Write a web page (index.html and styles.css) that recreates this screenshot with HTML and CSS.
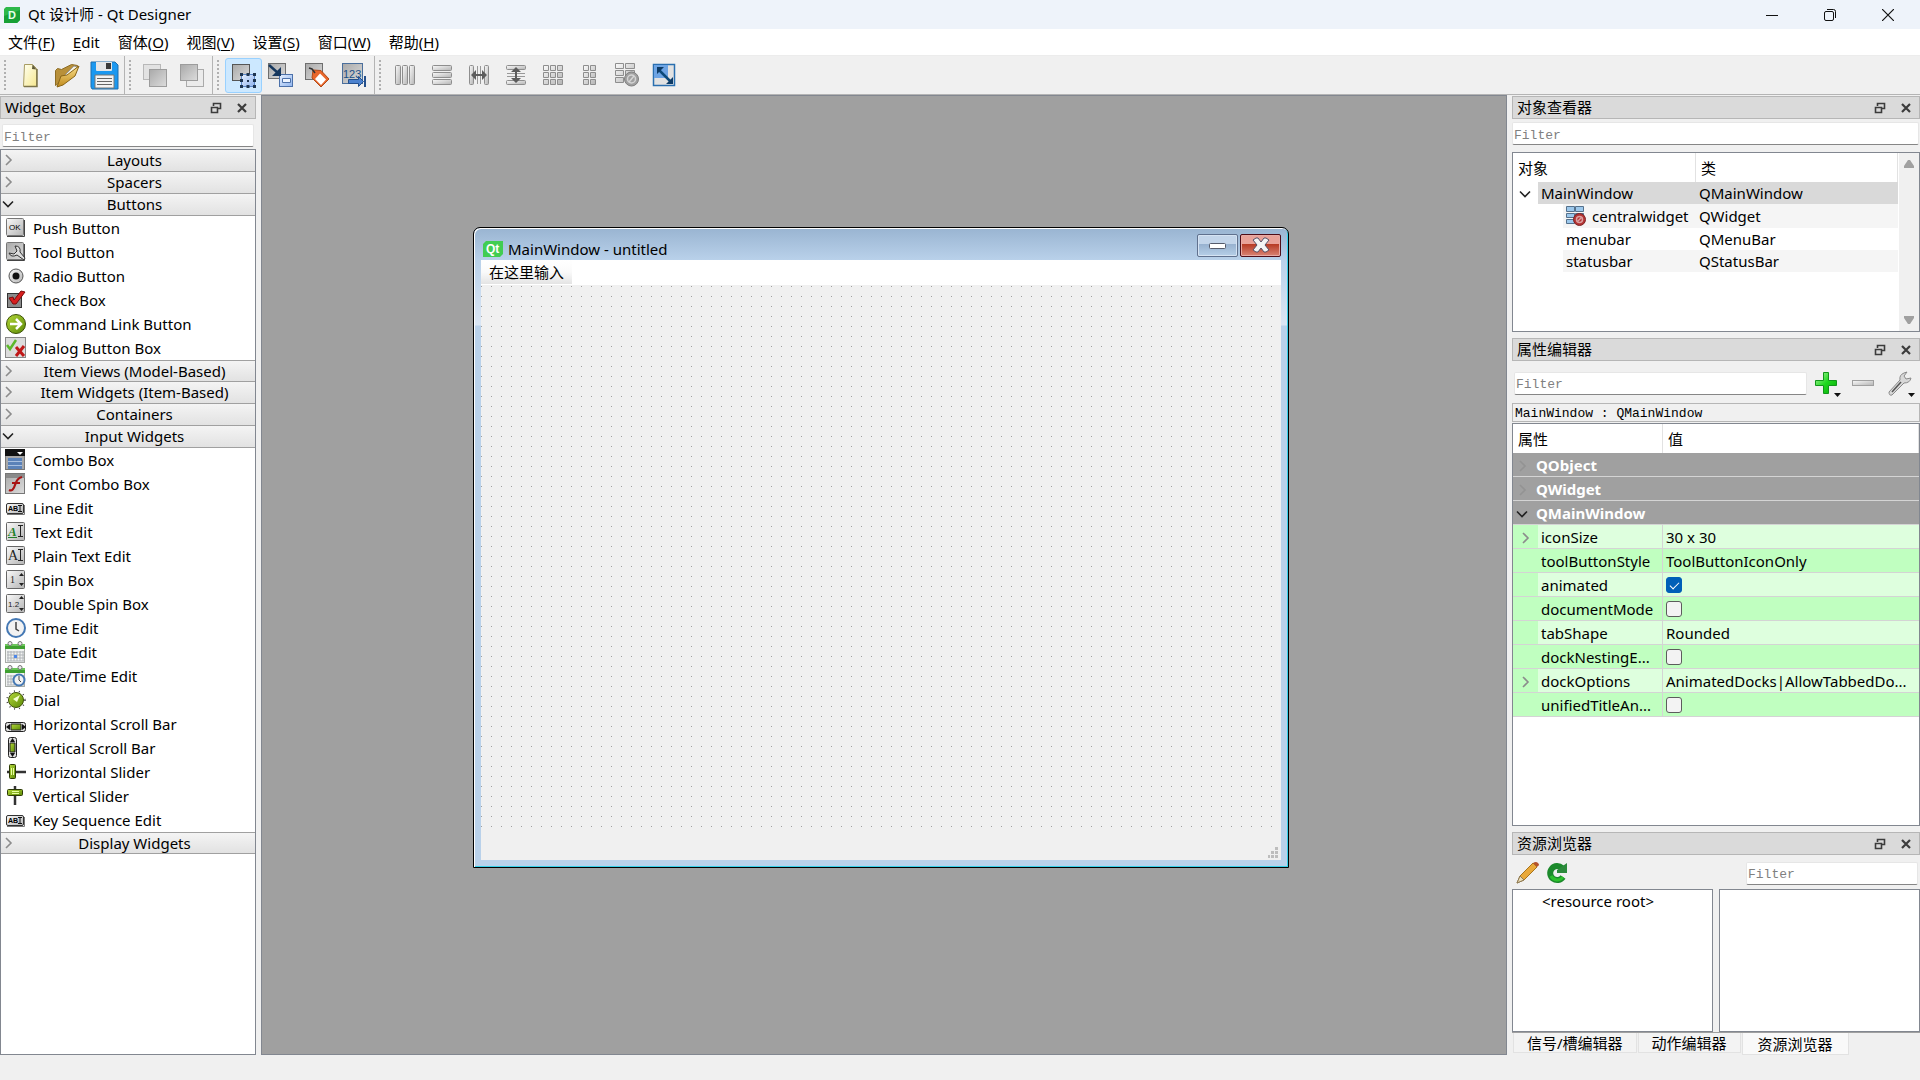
FILE: index.html
```html
<!DOCTYPE html>
<html lang="zh-CN">
<head>
    <meta charset="UTF-8">
    <meta name="viewport" content="width=device-width, initial-scale=1.0">
    <title>Qt 设计师 - Qt Designer</title>
    <link rel="stylesheet" href="styles.css">
</head>
<body>
    <!-- shared gradients and symbols -->
    <svg class="defs" width="0" height="0" aria-hidden="true">
        <defs>
            <linearGradient id="grey" x1="0" y1="0" x2="1" y2="1"><stop offset="0" stop-color="#fafafa"/><stop offset="1" stop-color="#b4b4b4"/></linearGradient>
            <linearGradient id="steel" x1="0" y1="0" x2="1" y2="1"><stop offset="0" stop-color="#a9a9a9"/><stop offset="1" stop-color="#dcdcdc"/></linearGradient>
            <linearGradient id="blue" x1="0" y1="0" x2="1" y2="1"><stop offset="0" stop-color="#e6f0ff"/><stop offset="1" stop-color="#8fb4ee"/></linearGradient>
            <linearGradient id="green" x1="0" y1="0" x2="1" y2="1"><stop offset="0" stop-color="#b4d83a"/><stop offset="1" stop-color="#5c8a06"/></linearGradient>
            <linearGradient id="gold" x1="0" y1="0" x2="0" y2="1"><stop offset="0" stop-color="#fbe08a"/><stop offset="1" stop-color="#c08a1c"/></linearGradient>
            <linearGradient id="page" x1="0" y1="0" x2="1" y2="1"><stop offset="0" stop-color="#fffff0"/><stop offset="1" stop-color="#f6e890"/></linearGradient>
            <linearGradient id="plus" x1="0" y1="0" x2="1" y2="1"><stop offset="0" stop-color="#b8f5a8"/><stop offset="0.5" stop-color="#1fd81f"/><stop offset="1" stop-color="#06a806"/></linearGradient>
        </defs>
        <symbol id="chev-right" viewBox="0 0 12 12"><path d="M4 1l5 5-5 5" fill="none" stroke="#8c8c8c" stroke-width="1.6"/></symbol>
        <symbol id="chev-down" viewBox="0 0 12 12"><path d="M1 3.500l5 5 5-5" fill="none" stroke="#222" stroke-width="1.6"/></symbol>
        <symbol id="float" viewBox="0 0 12 12"><path d="M3.500 4V1.500h7v5H8M3 1.500h8" fill="none" stroke="#3c3c3c" stroke-width="1.600"/><path d="M1.500 5.500h6v5h-6zM1 5.500h7" fill="none" stroke="#3c3c3c" stroke-width="1.600"/></symbol>
        <symbol id="close" viewBox="0 0 12 12"><path d="M2 2l8 8M10 2l-8 8" fill="none" stroke="#3c3c3c" stroke-width="2.200"/></symbol>
        <symbol id="cal" viewBox="0 0 22 22"><rect x="1.500" y="4.500" width="19" height="17" fill="#f2f4f2" stroke="#a8aca8"/><path d="M1 3h20v5H1z" fill="#3fa030"/><path d="M1 3h20v2H1z" fill="#6cc65c"/><path d="M4 10v10M7 10v10M10 10v10M13 10v10M16 10v10M19 10v10M3 11h17M3 14h17M3 17h17M3 20h17" stroke="#b0b4b8" stroke-width="1"/><circle cx="6" cy="2.500" r="2" fill="#eee" stroke="#777"/><circle cx="16" cy="2.500" r="2" fill="#eee" stroke="#777"/></symbol>
    </svg>

    <header class="titlebar">
        <svg class="app-icon" width="16" height="16" viewBox="0 0 16 16"><path d="M2 0h14v13l-3 3H0V2z" fill="#2db84a"/><path d="M0 16V9l16-6v10l-3 3z" fill="#17a035"/><text x="4" y="12" font-size="11" font-weight="bold" fill="#e4ffe8" font-family="Liberation Sans">D</text></svg>
        <h1>Qt 设计师 - Qt Designer</h1>
        <div class="window-buttons">
            <button aria-label="Minimize"><svg width="12" height="12"><path d="M0 6.500h12" stroke="#111"/></svg></button>
            <button aria-label="Restore"><svg width="12" height="12" fill="none" stroke="#111"><rect x="0.500" y="2.500" width="9" height="9" rx="1.500"/><path d="M3 .5h6.500q2 0 2 2V9"/></svg></button>
            <button aria-label="Close"><svg width="12" height="12"><path d="M0 0l12 12M12 0L0 12" stroke="#111" stroke-width="1.200"/></svg></button>
        </div>
    </header>

    <nav class="menubar">
        <button>文件(<u>F</u>)</button>
        <button><u>E</u>dit</button>
        <button>窗体(<u>O</u>)</button>
        <button>视图(<u>V</u>)</button>
        <button>设置(<u>S</u>)</button>
        <button>窗口(<u>W</u>)</button>
        <button>帮助(<u>H</u>)</button>
    </nav>

    <div class="toolbars">
        <div class="toolbar">
            <button aria-label="New"><svg width="30" height="30"><path d="M9.500 4.500h8l4 4v18H8.500z" fill="url(#page)" stroke="#a89c62"/><path d="M17.500 4.500l-.5 4.500 4.500.5z" fill="#5f5a3a"/><path d="M22 9v17.500H9" fill="none" stroke="#7c744a" stroke-width="1.500"/></svg></button>
            <button aria-label="Open"><svg width="30" height="30"><path d="M3.500 25.500v-15l2-2 4 1 10-5 6 1v4z" fill="#b8903a" stroke="#8d6c24"/><path d="M8 20l14-14 3 1-13 16z" fill="#f6f2e2" stroke="#999"/><path d="M5 27l4-11 6-1 12-9-4 10-12 9z" fill="url(#gold)" stroke="#8a6516"/></svg></button>
            <button aria-label="Save"><svg width="30" height="30"><path d="M2 2h24l3 3v24H3l-1-2z" fill="#1b98f0" stroke="#1f6fae"/><path d="M7 2h16v8q0 1-1 1H8q-1 0-1-1z" fill="#e4e6e8"/><path d="M17 3h5v6h-5z" fill="#3a3a3a"/><path d="M6 15h19v13H6z" fill="#f3f3f3" stroke="#777"/><path d="M8 18.500h15M8 21.500h15M8 24.500h15" stroke="#666"/></svg></button>
        </div>
        <div class="toolbar">
            <button aria-label="Send to back"><svg width="30" height="30"><rect x="3.500" y="4.500" width="17" height="15" fill="#e2e2e2" stroke="#b8b8b8"/><rect x="9.500" y="9.500" width="17" height="17" fill="url(#steel)" stroke="#9c9c9c"/></svg></button>
            <button aria-label="Bring to front"><svg width="30" height="30"><rect x="9.500" y="9.500" width="17" height="17" fill="#ebebeb" stroke="#aaa"/><rect x="3.500" y="4.500" width="17" height="16" fill="url(#steel)" stroke="#9c9c9c"/></svg></button>
        </div>
        <div class="toolbar">
            <button class="active" aria-label="Edit widgets"><svg width="30" height="30"><rect x="4.500" y="4.500" width="17" height="16" fill="url(#steel)" stroke="#555"/><rect x="13.500" y="14.500" width="13" height="12" fill="url(#blue)" stroke="#5d88c8"/><path d="M12 13h3v3h-3zM18.500 13h3v3h-3zM25 13h3v3h-3zM12 19h3v3h-3zM25 19h3v3h-3zM12 25h3v3h-3zM18.500 25h3v3h-3zM25 25h3v3h-3zM19 20h2v2h-2z" fill="#1e3550"/></svg></button>
            <button aria-label="Edit signals and slots"><svg width="30" height="30"><rect x="3.500" y="3.500" width="17" height="15" fill="url(#steel)" stroke="#6e6e6e"/><rect x="14.500" y="14.500" width="13" height="12" fill="url(#blue)" stroke="#4c71aa"/><path d="M17.500 18.500h8v4h-8z" fill="#eef5ff" stroke="#4c71aa"/><path d="M4 5l9 8" stroke="#17385e" stroke-width="2.500"/><path d="M16 7v9H7z" fill="#17385e"/></svg></button>
            <button aria-label="Edit buddies"><svg width="30" height="30"><rect x="3.500" y="3.500" width="17" height="16" fill="url(#steel)" stroke="#6e6e6e"/><path d="M11 10l8 .5L27 19l-8 8-9-9z" fill="#e9662a" stroke="#b04a18"/><path d="M18 13.500l6 6-5 5.500-6-6z" fill="#fff"/><path d="M13 13l-3-4-3-1" fill="none" stroke="#333" stroke-width="1.500"/></svg></button>
            <button aria-label="Edit tab order"><svg width="30" height="30"><rect x="3.500" y="3.500" width="20" height="20" fill="url(#steel)" stroke="#4b6f9c"/><text x="4" y="18" font-size="11" fill="#1c4f86" font-family="Liberation Sans">123</text><path d="M9.500 19.500h10v-3l5 5-5 5v-3h-10z" fill="#4c82cf" stroke="#24508c"/><path d="M26 16v11" stroke="#24508c" stroke-width="2"/></svg></button>
        </div>
        <div class="toolbar">
            <button aria-label="Lay out horizontally"><svg width="30" height="30" fill="url(#grey)" stroke="#8e8e8e"><rect x="5.500" y="5.500" width="5" height="19" rx="1"/><rect x="12.500" y="5.500" width="5" height="19" rx="1"/><rect x="19.500" y="5.500" width="5" height="19" rx="1"/></svg></button>
            <button aria-label="Lay out vertically"><svg width="30" height="30" fill="url(#grey)" stroke="#8e8e8e"><rect x="5.500" y="5.500" width="19" height="5" rx="1"/><rect x="5.500" y="12.500" width="19" height="5" rx="1"/><rect x="5.500" y="19.500" width="19" height="5" rx="1"/></svg></button>
            <button aria-label="Horizontal splitter"><svg width="30" height="30" fill="url(#grey)" stroke="#8e8e8e"><rect x="5.500" y="5.500" width="4" height="19" rx="1"/><rect x="20.500" y="5.500" width="4" height="19" rx="1"/><path d="M13.500 6v18M16.500 6v18" stroke="#999"/><path d="M7 15l5-5v4h6v-4l5 5-5 5v-4h-6v4z" fill="#5c5c5c" stroke="none"/></svg></button>
            <button aria-label="Vertical splitter"><svg width="30" height="30" fill="url(#grey)" stroke="#8e8e8e"><rect x="5.500" y="5.500" width="19" height="4" rx="1"/><rect x="5.500" y="20.500" width="19" height="4" rx="1"/><path d="M6 13.500h18M6 16.500h18" stroke="#999"/><path d="M15 7l5 5h-4v6h4l-5 5-5-5h4v-6h-4z" fill="#5c5c5c" stroke="none"/></svg></button>
            <button aria-label="Lay out in a grid"><svg width="30" height="30" fill="url(#grey)" stroke="#8e8e8e"><path d="M5.500 5.500h5v5h-5zM12.500 5.500h5v5h-5zM19.500 5.500h5v5h-5zM5.500 12.500h5v5h-5zM12.500 12.500h5v5h-5zM19.500 12.500h5v5h-5zM5.500 19.500h5v5h-5zM12.500 19.500h5v5h-5zM19.500 19.500h5v5h-5z"/></svg></button>
            <button aria-label="Lay out in a form"><svg width="30" height="30" fill="url(#grey)" stroke="#8e8e8e"><path d="M8.500 5.500h5v5h-5zM15.500 5.500h5v5h-5zM8.500 12.500h5v5h-5zM15.500 12.500h5v5h-5zM8.500 19.500h5v5h-5zM15.500 19.500h5v5h-5z"/></svg></button>
            <button aria-label="Break layout"><svg width="30" height="30" fill="url(#grey)" stroke="#8e8e8e"><path d="M3.500 3.500h8v5h-8zM13.500 3.500h9v5h-9zM3.500 10.500h8v5h-8zM13.500 10.500h9v5h-9zM3.500 17.500h8v5h-8z"/><circle cx="19.500" cy="19" r="7" fill="#a0a0a0" stroke="#7f7f7f"/><circle cx="19.500" cy="19" r="4" fill="none" stroke="#d4d4d4" stroke-width="1.500"/><path d="M17 22l5-6" stroke="#d4d4d4" stroke-width="1.500"/></svg></button>
            <button aria-label="Adjust size"><svg width="30" height="30"><rect x="4.500" y="4.500" width="21" height="21" fill="#e2e2e2" stroke="#2a6fb0" stroke-width="1.500"/><path d="M5 5h14v13H5z" fill="#6da4e4"/><path d="M10 10l11 11" stroke="#0d4a7a" stroke-width="2.500"/><path d="M8 7h7l-7 7zM24 24h-7l7-7z" fill="#0d3b66"/></svg></button>
        </div>
    </div>

    <main class="workspace">
        <aside class="dock widget-box">
            <div class="dock-title">
                <h2>Widget Box</h2>
                <button aria-label="Float"><svg width="12" height="12"><use href="#float"/></svg></button>
                <button aria-label="Close"><svg width="12" height="12"><use href="#close"/></svg></button>
            </div>
            <input class="filter" type="text" placeholder="Filter" aria-label="Filter widgets">
            <div class="categories">
                <button class="category"><svg width="12" height="12"><use href="#chev-right"/></svg><span>Layouts</span></button>
                <button class="category"><svg width="12" height="12"><use href="#chev-right"/></svg><span>Spacers</span></button>
                <button class="category"><svg width="12" height="12"><use href="#chev-down"/></svg><span>Buttons</span></button>
                <ul>
                    <li><svg width="22" height="22"><rect x="2.500" y="1.500" width="17" height="17" rx="1" fill="url(#grey)" stroke="#777"/><path d="M3 19.500h17.500V3" fill="none" stroke="#444"/><text x="5" y="13" font-size="8" font-family="Liberation Sans">OK</text></svg>Push Button</li>
                    <li><svg width="22" height="22"><rect x="2.500" y="1.500" width="17" height="17" rx="1" fill="url(#steel)" stroke="#777"/><path d="M3 19.500h17.500V3" fill="none" stroke="#444"/><path d="M20 19l-7-5q-6 3-8-2l5 1 3-3-2-5q6 0 5 6l5 6z" fill="#ddd" stroke="#333"/></svg>Tool Button</li>
                    <li><svg width="22" height="22"><circle cx="12" cy="11" r="7" fill="url(#grey)" stroke="#555"/><circle cx="12" cy="11" r="3.500" fill="#111"/></svg>Radio Button</li>
                    <li><svg width="22" height="22"><rect x="3.500" y="4.500" width="14" height="14" fill="#8b8b8b" stroke="#333"/><path d="M5 9l4-1 1 3 7-9 4 1-9 12H9z" fill="#d81e1e" stroke="#7a0c0c"/></svg>Check Box</li>
                    <li><svg width="22" height="22"><circle cx="12" cy="11" r="9.500" fill="url(#green)" stroke="#3d5207"/><path d="M6 11h10M12 6l5 5-5 5" fill="none" stroke="#fff" stroke-width="2.500"/></svg>Command Link Button</li>
                    <li><svg width="22" height="22"><rect x="1.500" y="0.500" width="20" height="20" fill="#dcdcdc" stroke="#888"/><path d="M3 8l3 4 6-9" fill="none" stroke="#5cb82a" stroke-width="2.500"/><path d="M12 10l8 9M20 9l-8 10" stroke="#c01818" stroke-width="3"/></svg>Dialog Button Box</li>
                </ul>
                <button class="category"><svg width="12" height="12"><use href="#chev-right"/></svg><span>Item Views (Model-Based)</span></button>
                <button class="category"><svg width="12" height="12"><use href="#chev-right"/></svg><span>Item Widgets (Item-Based)</span></button>
                <button class="category"><svg width="12" height="12"><use href="#chev-right"/></svg><span>Containers</span></button>
                <button class="category"><svg width="12" height="12"><use href="#chev-down"/></svg><span>Input Widgets</span></button>
                <ul>
                    <li><svg width="22" height="22"><rect x="1.500" y="0.500" width="19" height="20" fill="#a8a8a8" stroke="#777"/><path d="M1 0h20v7H1z" fill="#111"/><path d="M13 3h6l-3 3z" fill="#fff"/><path d="M4 9h14v11H4z" fill="#5b82b8"/><path d="M4 12.500h14M4 16.500h14" stroke="#a9c0e0"/></svg>Combo Box</li>
                    <li><svg width="22" height="22"><rect x="1.500" y="0.500" width="19" height="20" fill="url(#steel)" stroke="#777"/><path d="M2 1h19v4H2z" fill="#8a8a8a"/><path d="M5 17q4 2 6-5t7-8M8 10h8" fill="none" stroke="#a81414" stroke-width="2.200"/></svg>Font Combo Box</li>
                    <li><svg width="22" height="22"><rect x="2.500" y="6.500" width="17" height="10" rx="1.500" fill="url(#grey)" stroke="#333"/><path d="M3 17.500h17.500V8" fill="none" stroke="#777"/><text x="4" y="14" font-size="7" font-weight="bold" font-family="Liberation Sans">AB</text><path d="M14 8.500h4M16 8.500v6M14 14.500h4" stroke="#111" fill="none"/></svg>Line Edit</li>
                    <li><svg width="22" height="22"><rect x="2.500" y="1.500" width="18" height="18" rx="1" fill="url(#grey)" stroke="#666"/><text x="4" y="15" font-size="13" font-style="italic" font-weight="bold" fill="#23802c" font-family="Liberation Serif">A</text><path d="M4 16.500h9" stroke="#23802c"/><path d="M14 4.500h5M16.500 4.500v11M14 15.500h5" stroke="#222" fill="none"/></svg>Text Edit</li>
                    <li><svg width="22" height="22"><rect x="2.500" y="1.500" width="18" height="18" rx="1" fill="url(#grey)" stroke="#666"/><text x="4" y="15" font-size="14" fill="#222" font-family="Liberation Serif">A</text><path d="M14 4.500h5M16.500 4.500v11M14 15.500h5" stroke="#222" fill="none"/></svg>Plain Text Edit</li>
                    <li><svg width="22" height="22"><rect x="2.500" y="1.500" width="18" height="18" rx="1" fill="url(#grey)" stroke="#666"/><text x="6" y="14" font-size="10" fill="#222" font-family="Liberation Serif">1</text><path d="M15 7h5l-2.500-3zM15 14h5l-2.500 3z" fill="#222"/></svg>Spin Box</li>
                    <li><svg width="22" height="22"><rect x="2.500" y="1.500" width="18" height="18" rx="1" fill="url(#grey)" stroke="#666"/><text x="4" y="14" font-size="8" fill="#222" font-family="Liberation Sans">1.2</text><path d="M15 6h5l-2.500-3zM15 15h5l-2.500 3z" fill="#222"/></svg>Double Spin Box</li>
                    <li><svg width="22" height="22"><circle cx="12" cy="11" r="9" fill="#f2f2f2" stroke="#4478b4" stroke-width="2"/><path d="M12 5v7l3 2" fill="none" stroke="#444" stroke-width="1.500"/></svg>Time Edit</li>
                    <li><svg width="22" height="22"><use href="#cal"/><path d="M10 14h3v3h-3z" fill="#4c87e8"/></svg>Date Edit</li>
                    <li><svg width="22" height="22"><use href="#cal"/><circle cx="15" cy="15" r="5.500" fill="#f2f2f2" stroke="#4478b4" stroke-width="2"/><path d="M15 11v4l2 2" fill="none" stroke="#444"/></svg>Date/Time Edit</li>
                    <li><svg width="22" height="22"><circle cx="12" cy="11" r="9" fill="none" stroke="#444" stroke-width="1.500" stroke-dasharray="1 4"/><circle cx="12" cy="11" r="7.500" fill="url(#green)" stroke="#3d5207"/><path d="M9 10l7-4-3 7z" fill="#f4ffd0"/></svg>Dial</li>
                    <li><svg width="22" height="22"><rect x="1.500" y="9.500" width="20" height="9" rx="2" fill="#ddd" stroke="#222"/><path d="M7 11h10v6H7z" fill="url(#green)" stroke="#222"/><path d="M6 11v6l-4-3zM18 11v6l4-3z" fill="#111"/></svg>Horizontal Scroll Bar</li>
                    <li><svg width="22" height="22"><rect x="4.500" y="0.500" width="8" height="20" rx="2" fill="#ddd" stroke="#222"/><path d="M6 6h5v9H6z" fill="url(#green)" stroke="#222"/><path d="M6 5h5l-2.500-4zM6 16h5l-2.500 4z" fill="#111"/></svg>Vertical Scroll Bar</li>
                    <li><svg width="22" height="22"><path d="M3 11h19" stroke="#333" stroke-width="2.500"/><rect x="5.500" y="3.500" width="6" height="14" rx="1" fill="url(#green)" stroke="#2c3a06"/><path d="M7.500 7v7M9.500 7v7" stroke="#e8ffa0"/></svg>Horizontal Slider</li>
                    <li><svg width="22" height="22"><path d="M11 1v19" stroke="#333" stroke-width="2.500"/><rect x="3.500" y="4.500" width="15" height="6" rx="1" fill="url(#green)" stroke="#2c3a06"/><path d="M8 6.500h7M8 8.500h7" stroke="#e8ffa0"/></svg>Vertical Slider</li>
                    <li><svg width="22" height="22"><rect x="2.500" y="6.500" width="17" height="10" rx="1.500" fill="url(#grey)" stroke="#333"/><path d="M3 17.500h17.500V8" fill="none" stroke="#777"/><text x="4" y="14" font-size="7" font-weight="bold" font-family="Liberation Sans">AB</text><path d="M14 8.500h4M16 8.500v6M14 14.500h4" stroke="#111" fill="none"/></svg>Key Sequence Edit</li>
                </ul>
                <button class="category"><svg width="12" height="12"><use href="#chev-right"/></svg><span>Display Widgets</span></button>
            </div>
        </aside>

        <section class="mdi">
            <div class="form-window">
                <div class="form-title">
                    <svg width="20" height="16"><path d="M3 0h17v13l-3 3H0V3z" fill="#41cd52"/><text x="3" y="12" font-size="12" font-weight="bold" fill="#fff" font-family="Liberation Sans">Qt</text></svg>
                    <span>MainWindow - untitled</span>
                    <button class="form-min" aria-label="Minimize"><svg width="18" height="7"><rect x="0.500" y="0.500" width="16" height="5" rx="1" fill="#fff" stroke="#555b6b"/></svg></button>
                    <button class="form-close" aria-label="Close"><svg width="18" height="16"><path d="M1 3l3-2h2l3 4 3-4h2l3 2-4 5 4 5-3 2h-2l-3-4-3 4H4l-3-2 4-5z" fill="#f4f4f4" stroke="#565066"/></svg></button>
                </div>
                <div class="form-menubar"><button>在这里输入</button></div>
                <div class="form-canvas"></div>
                <div class="form-status"><svg width="10" height="11" fill="#bdbdbd"><path d="M7 0h3v3H7zM3 4h3v3H3zM7 4h3v3H7zM0 8h2v3H0zM3 8h3v3H3zM7 8h3v3H7z"/></svg></div>
            </div>
        </section>

        <aside class="right-docks">
            <section class="dock">
                <div class="dock-title">
                    <h2>对象查看器</h2>
                    <button aria-label="Float"><svg width="12" height="12"><use href="#float"/></svg></button>
                    <button aria-label="Close"><svg width="12" height="12"><use href="#close"/></svg></button>
                </div>
                <input class="filter" type="text" placeholder="Filter" aria-label="Filter objects">
                <div class="object-tree">
                    <table>
                        <thead><tr><th>对象</th><th>类</th></tr></thead>
                        <tbody>
                            <tr class="root"><td><svg width="12" height="12"><use href="#chev-down"/></svg>MainWindow</td><td>QMainWindow</td></tr>
                            <tr class="alt central"><td><svg width="20" height="20"><path d="M.5 .5h8v5h-8zM9.500 .5h8v5h-8zM.5 7.500h8v4h-8zM9.500 7.500h8v4h-8zM.5 13.500h8v4h-8z" fill="#9cc8ec" stroke="#55718c"/><circle cx="13.500" cy="13.500" r="6" fill="#b43434" stroke="#7e2424"/><circle cx="13.500" cy="13.500" r="3" fill="none" stroke="#dca0a0" stroke-width="1.500"/><path d="M11.500 15.500l4-4" stroke="#dca0a0" stroke-width="1.500"/></svg>centralwidget</td><td>QWidget</td></tr>
                            <tr><td>menubar</td><td>QMenuBar</td></tr>
                            <tr class="alt"><td>statusbar</td><td>QStatusBar</td></tr>
                        </tbody>
                    </table>
                    <div class="scrollbar">
                        <svg width="10" height="8"><path d="M0 8V6l4-6h2l4 6v2z" fill="#a0a0a0"/></svg>
                        <svg width="10" height="8"><path d="M0 0v2l4 6h2l4-6V0z" fill="#a0a0a0"/></svg>
                    </div>
                </div>
            </section>

            <section class="dock property-editor">
                <div class="dock-title">
                    <h2>属性编辑器</h2>
                    <button aria-label="Float"><svg width="12" height="12"><use href="#float"/></svg></button>
                    <button aria-label="Close"><svg width="12" height="12"><use href="#close"/></svg></button>
                </div>
                <div class="property-tools">
                    <input class="filter" type="text" placeholder="Filter" aria-label="Filter properties">
                    <button aria-label="Add property"><svg width="28" height="28"><path d="M10.500 3.500h5v8h8v5h-8v8h-5v-8h-8v-5h8z" fill="url(#plus)" stroke="#12961a"/><path d="M21 24h7l-3.500 4z" fill="#111"/></svg></button>
                    <button aria-label="Remove property"><svg width="28" height="28"><rect x="2.500" y="11.500" width="21" height="5" fill="url(#grey)" stroke="#a0a0a0"/></svg></button>
                    <button aria-label="Configure"><svg width="28" height="28"><path d="M2 23l11-12q-1-5 4-7l3-1-3 4 2 3 5-1q-1 5-7 5L5 26q-3 1-3-3z" fill="#d8d8d8" stroke="#8a8a8a"/><path d="M5 23l9-10" stroke="#555" stroke-width="1.500"/><path d="M21 24h7l-3.500 4z" fill="#111"/></svg></button>
                </div>
                <p class="object-name">MainWindow : QMainWindow</p>
                <div class="property-list">
                    <table>
                        <thead><tr><th>属性</th><th>值</th></tr></thead>
                        <tbody>
                            <tr class="group closed"><td colspan="2"><svg width="12" height="12"><use href="#chev-right"/></svg>QObject</td></tr>
                            <tr class="group closed"><td colspan="2"><svg width="12" height="12"><use href="#chev-right"/></svg>QWidget</td></tr>
                            <tr class="group"><td colspan="2"><svg width="12" height="12"><use href="#chev-down"/></svg>QMainWindow</td></tr>
                            <tr class="light"><td><svg width="12" height="12"><use href="#chev-right"/></svg>iconSize</td><td>30 x 30</td></tr>
                            <tr><td>toolButtonStyle</td><td>ToolButtonIconOnly</td></tr>
                            <tr class="light"><td><label for="animated">animated</label></td><td><input type="checkbox" id="animated" checked></td></tr>
                            <tr><td><label for="documentMode">documentMode</label></td><td><input type="checkbox" id="documentMode"></td></tr>
                            <tr class="light"><td>tabShape</td><td>Rounded</td></tr>
                            <tr><td><label for="dockNesting">dockNestingE...</label></td><td><input type="checkbox" id="dockNesting"></td></tr>
                            <tr class="light"><td><svg width="12" height="12"><use href="#chev-right"/></svg>dockOptions</td><td>AnimatedDocks|AllowTabbedDo...</td></tr>
                            <tr><td><label for="unifiedTitle">unifiedTitleAn...</label></td><td><input type="checkbox" id="unifiedTitle"></td></tr>
                        </tbody>
                    </table>
                </div>
            </section>

            <section class="dock">
                <div class="dock-title">
                    <h2>资源浏览器</h2>
                    <button aria-label="Float"><svg width="12" height="12"><use href="#float"/></svg></button>
                    <button aria-label="Close"><svg width="12" height="12"><use href="#close"/></svg></button>
                </div>
                <div class="resource-tools">
                    <button aria-label="Edit resources"><svg width="24" height="24"><path d="M1 22l3-7L17 2l4 4L8 19z" fill="#e9a93a" stroke="#a8741c"/><path d="M1 22l3-7 4 4z" fill="#ecdcb4" stroke="#8a7a5a"/><path d="M17 2q3-2 5 0t0 3l-1 1z" fill="#b5532c"/></svg></button>
                    <button aria-label="Reload"><svg width="24" height="24"><path d="M18 16a7 7 0 1 1-1-9" fill="none" stroke="#1c8a2c" stroke-width="6"/><path d="M12 12V9l10-7v10z" fill="#2c8a3c"/><path d="M18 16a7 7 0 0 1-12-1" fill="none" stroke="#2cc02c" stroke-width="3"/></svg></button>
                    <input class="filter" type="text" placeholder="Filter" aria-label="Filter resources">
                </div>
                <div class="resource-views">
                    <div class="resource-tree">&lt;resource root&gt;</div>
                    <div></div>
                </div>
                <div class="tabs">
                    <button>信号/槽编辑器</button>
                    <button>动作编辑器</button>
                    <button class="selected">资源浏览器</button>
                </div>
            </section>
        </aside>
    </main>
    <footer class="statusbar"></footer>
</body>
</html>
```
FILE: styles.css
```css
* {
    box-sizing: border-box;
}

body {
    margin: 0;
    min-height: 100vh;
    display: flex;
    flex-direction: column;
    background-color: #f0f0f0;
    color: #000;
    font-family: "Noto Sans", "Noto Sans CJK SC", sans-serif;
    font-size: 15px;
    line-height: 22px;
}

button {
    display: flex;
    align-items: center;
    justify-content: center;
    margin: 0;
    padding: 0;
    border: none;
    background: none;
    color: inherit;
    font: inherit;
}

h1, h2, p, ul {
    margin: 0;
    padding: 0;
    font-size: 15px;
    font-weight: normal;
}

svg {
    flex: none;
}

.defs {
    position: absolute;
}

/* title bar and menu */
.titlebar {
    display: flex;
    align-items: center;
    height: 29px;
    padding-left: 4px;
    background-color: #eef3fa;
}

.titlebar h1 {
    flex: 1;
    padding-bottom: 2px;
    margin-left: 8px;
}

.window-buttons {
    display: flex;
    padding-right: 3px;
}

.window-buttons button {
    width: 58px;
    height: 28px;
}

.menubar {
    display: flex;
    gap: 2px;
    height: 27px;
    padding-bottom: 1px;
    background-color: #fff;
    border-bottom: 1px solid #ececec;
}

.menubar button {
    padding: 0 8px;
}

.menubar u {
    text-underline-offset: 2px;
}

/* toolbars */
.toolbars {
    display: flex;
    height: 38px;
}

.toolbar {
    display: flex;
    align-items: center;
    padding-right: 1px;
    border-right: 1px solid #b4b4b4;
}

.toolbar:last-child {
    border-right: none;
}

.toolbar::before {
    content: "";
    width: 12px;
    height: 30px;
    background: repeating-linear-gradient(#b0b0b0 0 2px, transparent 2px 4px) 4px 0 / 2px 100% no-repeat;
}

.toolbar button {
    width: 37px;
    height: 35px;
    padding: 0 2px 1px 0;
    border: 1px solid transparent;
    border-radius: 3px;
}

.toolbar .active {
    background-color: #cce8ff;
    border-color: #99d1ff;
}

/* docks */
.workspace {
    flex: 1;
    display: flex;
    border-top: 1px solid #b4b4b4;
}

.dock {
    display: flex;
    flex-direction: column;
}

.dock-title {
    display: flex;
    height: 23px;
    padding-left: 4px;
    background-color: #dadada;
    border: 1px solid #b6b6b6;
}

.dock-title h2 {
    flex: 1;
    line-height: 20px;
}

.dock-title button {
    width: 26px;
}

.filter {
    height: 23px;
    min-width: 0;
    padding: 3px 1px 0;
    border: 1px solid #e6e6e6;
    border-bottom-color: #868686;
    border-radius: 2px;
    outline: none;
    background-color: #fff;
    font-family: "Liberation Mono", monospace;
    font-size: 13px;
}

.filter::placeholder {
    color: #808080;
}

.widget-box {
    width: 256px;
    margin: 1px 5px 0 0;
}

.widget-box .filter {
    margin: 5px 2px 2px;
}

.categories {
    flex: 1;
    background-color: #fff;
    border: 1px solid #828790;
}

.category {
    width: 100%;
    height: 22px;
    padding: 0 0 1px 1px;
    background-image: linear-gradient(#f4f4f4, #e2e2e2);
    border-bottom: 1px solid #a0a0a0;
}

.category span {
    flex: 1;
}

.categories ul {
    list-style: none;
}

.categories ul + .category {
    border-top: 1px solid #a0a0a0;
}

.categories li {
    display: flex;
    align-items: center;
    gap: 7px;
    height: 24px;
    padding-left: 3px;
}

/* form being edited */
.mdi {
    flex: 1;
    position: relative;
    background-color: #a0a0a0;
    border: 1px solid #828790;
}

.form-window {
    position: absolute;
    left: 211px;
    top: 131px;
    width: 816px;
    padding: 0 7px 7px;
    border: 1px solid #000;
    border-radius: 7px 7px 0 0;
    background: linear-gradient(#99b4d1, #b9d1ea 32px, #dbe6f4 97px, #b9d1ea 98px);
    box-shadow: inset 1px 1px #fff, inset -1px -1px #35cfe8;
}

.form-title {
    display: flex;
    align-items: center;
    height: 32px;
    padding: 5px 0 0 2px;
    gap: 2px;
}

.form-title svg {
    margin-top: 4px;
}

.form-title span {
    flex: 1;
    padding: 5px 0 0 3px;
}

.form-title button {
    width: 41px;
    height: 23px;
    margin-bottom: 3px;
    border: 1px solid #60718e;
    border-radius: 2px;
    background-image: linear-gradient(#c3d5ea 45%, #98b2d0 45%, #b6cfe8);
    box-shadow: inset 0 0 0 1px #d5e3f3;
}

.form-title button svg {
    margin: 0;
}

.form-title .form-min svg {
    margin-top: 3px;
}

.form-title .form-close {
    border-color: #4e0d18;
    background-image: linear-gradient(#e9a299 45%, #b83c26 45%, #d98474);
    box-shadow: inset 0 0 0 1px #e8aaa4;
}

.form-menubar {
    display: flex;
    height: 25px;
    background-color: #fff;
}

.form-menubar button {
    height: 24px;
    padding: 0 8px;
    background-image: linear-gradient(#fff, #fafafa 50%, #e4e4e4);
}

.form-canvas {
    height: 550px;
    background: conic-gradient(from 270deg at 1px 1px, #a0a0a0 90deg, #f0f0f0 90deg) 0 1px / 10px 10px;
}

.form-status {
    display: flex;
    align-items: flex-end;
    justify-content: flex-end;
    height: 25px;
    padding: 0 3px 2px;
    background-color: #f0f0f0;
}

/* right side */
.right-docks {
    display: flex;
    flex-direction: column;
    gap: 6px;
    width: 408px;
    margin: 1px 0 0 5px;
}

.right-docks > .dock > .filter {
    margin: 3px 1px 7px 0;
}

table {
    width: 100%;
    border-collapse: separate;
    border-spacing: 0;
    table-layout: fixed;
}

th {
    height: 29px;
    padding: 1px 0 0 5px;
    border-right: 1px solid #e2e2e2;
    font-weight: normal;
    text-align: left;
}

td {
    padding: 0;
    white-space: nowrap;
}

.object-tree {
    display: flex;
    align-items: flex-start;
    height: 180px;
    background-color: #fff;
    border: 1px solid #828790;
}

.object-tree th:first-child {
    width: 183px;
}

.object-tree td {
    height: 22px;
    padding-left: 3px;
}

.object-tree td:first-child {
    padding-left: 53px;
}

.object-tree .root td {
    background-color: #d9d9d9;
}

.object-tree .root td:first-child {
    padding-left: 6px;
    background-image: linear-gradient(#fff, #fff);
    background-size: 25px 100%;
    background-repeat: no-repeat;
}

.root svg {
    margin-right: 10px;
    vertical-align: -1px;
}

.object-tree .alt td {
    background-color: #f5f5f5;
}

.object-tree .alt td:first-child {
    background-image: linear-gradient(#fff, #fff);
    background-size: 50px 100%;
    background-repeat: no-repeat;
}

.object-tree .central td {
    height: 24px;
}

.central svg {
    margin-right: 6px;
    vertical-align: -4px;
}

.scrollbar {
    display: flex;
    flex: none;
    flex-direction: column;
    align-items: center;
    justify-content: space-between;
    width: 21px;
    height: 100%;
    padding: 7px 0;
    background-color: #f0f0f0;
    border-left: 1px solid #fff;
}

.property-editor {
    flex: 1;
}

.property-tools {
    display: flex;
    align-items: center;
    gap: 9px;
    padding: 8px 5px 6px 2px;
}

.property-tools .filter {
    flex: 1;
    margin-right: -3px;
}

.object-name {
    height: 19px;
    padding-left: 2px;
    border: 1px solid #b6b6b6;
    font-family: "Liberation Mono", monospace;
    font-size: 13px;
    line-height: 19px;
}

.property-list {
    flex: 1;
    margin-top: 1px;
    background-color: #fff;
    border: 1px solid #828790;
}

.property-list th:first-child {
    width: 150px;
}

.property-list td {
    height: 24px;
    padding-left: 3px;
    background-color: #c0ffc0;
    border-bottom: 1px solid #d4d4d4;
}

.property-list td:first-child {
    padding-left: 28px;
    border-right: 1px solid #d4d4d4;
}

.property-list .light td {
    background-color: #deffde;
}

.property-list .light td:first-child {
    background-image: linear-gradient(#c0ffc0, #c0ffc0);
    background-size: 25px 100%;
    background-repeat: no-repeat;
}

.property-list td svg {
    margin: 0 10px 0 -22px;
    vertical-align: -1px;
}

.property-list .group td {
    padding-left: 25px;
    background-color: #a0a0a0;
    border-right: none;
    color: #fff;
    font-weight: bold;
}

.property-list .group svg {
    margin-right: 8px;
}

.property-list .closed svg {
    opacity: 0.6;
}

.property-list input {
    appearance: none;
    display: block;
    width: 16px;
    height: 16px;
    margin: 0;
    border: 1px solid #5c5c5c;
    border-radius: 3px;
    background-color: #f3f3f3;
}

.property-list input:checked {
    border-color: #005fb8;
    background-color: #005fb8;
}

/* tick */
.property-list input:checked::after {
    content: "";
    display: block;
    width: 8px;
    height: 4px;
    margin: 4px 0 0 3px;
    border: solid #fff;
    border-width: 0 0 1px 1px;
    transform: rotate(-45deg);
}

.resource-tools {
    display: flex;
    align-items: center;
    gap: 5px;
    padding: 6px 2px 4px 4px;
}

.resource-tools .filter {
    width: 172px;
    margin-left: auto;
}

.resource-views {
    display: flex;
    gap: 6px;
    height: 143px;
}

.resource-views div {
    flex: 1;
    background-color: #fff;
    border: 1px solid #828790;
}

.resource-views .resource-tree {
    text-indent: 29px;
}

.tabs {
    display: flex;
    align-items: flex-start;
    gap: 1px;
    height: 23px;
    padding-left: 1px;
    border-top: 1px solid #a0a0a0;
}

.tabs button {
    height: 20px;
    padding: 0 13px;
    border: 1px solid #e2e2e2;
    border-top: none;
    background-color: #f3f3f3;
}

.tabs .selected {
    height: 22px;
    padding: 0 15px;
    background-color: #f9f9f9;
}

.statusbar {
    height: 25px;
}
```
